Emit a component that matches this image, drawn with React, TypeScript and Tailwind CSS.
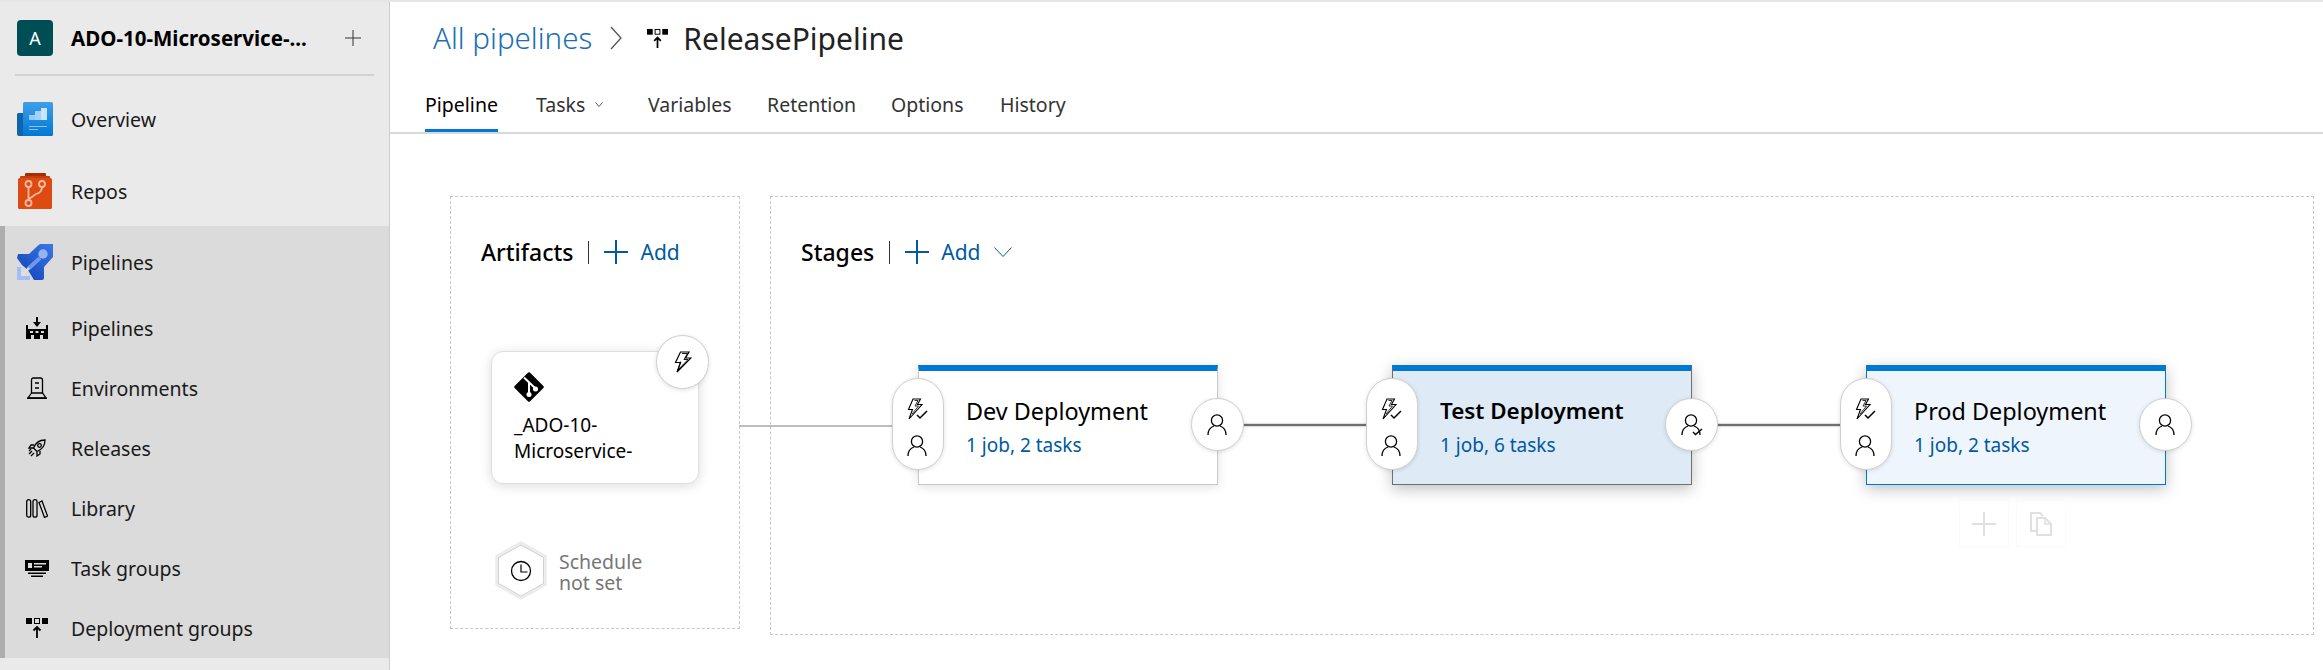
import React from "react";

const Person = ({ check = false }: { check?: boolean }) => (
  <svg width="22" height="22" viewBox="0 0 22 22" fill="none" stroke="#000" strokeWidth="1.3">
    <circle cx="10" cy="6.5" r="5.6" />
    <path d="M1 21c0-5 3-8 6-9M19 21c0-5-3-8-6-9" />
    {check && <path d="M12 18l2.5 2.5L21 15" strokeWidth="1.5" />}
  </svg>
);

const Bolt = () => (
  <svg width="18" height="22" viewBox="0 0 18 22" fill="none" stroke="#000" strokeWidth="1.2">
    <path d="M6.5 1H15l-3.500 6H17L3 21l3.500-9.500H1.500z" fill="#fff" />
    <path d="M8 2.500h5.500L10 8.500h4L4 19l2.800-8.500" strokeWidth="0.9" />
  </svg>
);

const BoltCheck = () => (
  <svg width="22" height="22" viewBox="0 0 22 22" fill="none" stroke="#000" strokeWidth="1.1">
    <path d="M6 1h7.500l-3 5.500H15L2 21l3.500-9.500H1.500z" />
    <path d="M7.500 2.500h3.500L8 8h3.500L5 16" strokeWidth="0.8" />
    <path d="M10 17l3 3 7-7" strokeWidth="1.5" />
  </svg>
);

const Plus = ({ size, color, w }: { size: number; color: string; w: number }) => (
  <svg width={size} height={size} viewBox={`0 0 ${size} ${size}`} stroke={color} strokeWidth={w}>
    <path d={`M${size / 2} 0V${size}M0 ${size / 2}H${size}`} />
  </svg>
);

const DeployIcon = ({ w = 22, h = 20 }: { w?: number; h?: number }) => (
  <svg width={w} height={h} viewBox="0 0 22 20">
    <rect x="0" y="0" width="6" height="6" fill="#000" />
    <rect x="8.500" y="0.500" width="5" height="5" fill="none" stroke="#000" />
    <rect x="16" y="0" width="6" height="6" fill="#000" />
    <path d="M11 20V9M7.500 12.500L11 9l3.500 3.500" fill="none" stroke="#000" strokeWidth="1.800" />
  </svg>
);

const Overview = () => (
  <svg width="36" height="34" viewBox="0 0 36 34">
    <defs>
      <linearGradient id="ov" x1="0" y1="0" x2="0" y2="1">
        <stop offset="0" stopColor="#3f9fe8" />
        <stop offset="1" stopColor="#0078d4" />
      </linearGradient>
    </defs>
    <path d="M1 11h8v23H2a2 2 0 0 1-2-2V12z" fill="#0f64ae" />
    <rect x="6" y="0" width="30" height="34" rx="1.500" fill="url(#ov)" />
    <rect x="12" y="13" width="6" height="5" fill="#c3e2fb" opacity="0.7" />
    <rect x="18" y="9" width="6" height="9" fill="#c3e2fb" opacity="0.8" />
    <rect x="24" y="6" width="6" height="12" fill="#c7e5fd" />
    <rect x="12" y="24" width="18" height="1" fill="#8cc5f2" />
    <rect x="12" y="27" width="9" height="1" fill="#8cc5f2" />
  </svg>
);

const Repos = () => (
  <svg width="34" height="36" viewBox="0 0 34 36" fill="none">
    <rect x="7" y="0" width="21" height="6" rx="1" fill="#a72e00" />
    <rect x="2" y="3" width="30" height="8" rx="1" fill="#c23f0e" />
    <rect x="0" y="5" width="34" height="31" rx="1.500" fill="#dd4b12" />
    <g stroke="#f7b9a0" strokeWidth="1.800">
      <circle cx="10.500" cy="11" r="3" />
      <circle cx="24" cy="11" r="3" />
      <circle cx="10.500" cy="30" r="3" />
      <path d="M10.500 14v13M24 14c0 4-2 6-6 7l-7 5" />
    </g>
  </svg>
);

const PipelinesLogo = () => (
  <svg width="36" height="36" viewBox="0 0 36 36">
    <defs>
      <linearGradient id="pl" x1="1" y1="0" x2="0" y2="1">
        <stop offset="0" stopColor="#3b78e7" />
        <stop offset="1" stopColor="#0f3fb5" />
      </linearGradient>
    </defs>
    <path d="M1 10h11L21 1.500 23 0h13v13l-9 10v11q0 2-2 2h-8l-6-10-6-5-5-7z" fill="url(#pl)" />
    <circle cx="26" cy="10" r="4.700" fill="#95b4f2" />
    <path d="M11 25L23 14" stroke="#6f97ec" strokeWidth="4" />
    <path d="M0 23h4v9h9v4H0z" fill="#a5bdf6" />
    <path d="M5 31l7-7" stroke="#e2e2e2" strokeWidth="2" />
  </svg>
);

const FactoryIcon = () => (
  <svg width="22" height="22" viewBox="0 0 22 22">
    <path d="M11 0v8" stroke="#000" strokeWidth="2" />
    <path d="M7 5l4 5 4-5z" fill="#000" />
    <path
      fillRule="evenodd"
      d="M0 8h2v4h18V8h2v14H0zM4 14v2h3v-2zM9.500 14v2h3v-2zM15 14v2h3v-2zM5 18v4h3v-4zM14 18v4h3v-4z"
      fill="#000"
    />
  </svg>
);

const EnvIcon = () => (
  <svg width="20" height="22" viewBox="0 0 20 22" fill="none" stroke="#000" strokeWidth="1.300">
    <path d="M4.500 16V3q0-2 2-2h7q2 0 2 2v13" />
    <path d="M8 6h4M8 11h4" />
    <path d="M4.500 16L1 21h18l-3.500-5z" />
    <path d="M0 21.300h20" strokeWidth="1.400" />
  </svg>
);

const RocketIcon = () => (
  <svg width="18" height="18" viewBox="0 0 18 18" fill="none" stroke="#000" strokeWidth="1.300">
    <path d="M5.500 9C7.500 4 11 1 17 1c0 6-3 9.500-8 11.500z" />
    <circle cx="11.500" cy="6.500" r="1.800" />
    <path d="M6 6H3L1 9h4M12 12v3l-3 2v-4" />
    <path d="M4 12l-3 3M6 14l-3 3M3 10l-2 2" />
  </svg>
);

const LibraryIcon = () => (
  <svg width="22" height="19" viewBox="0 0 22 19" fill="none" stroke="#000" strokeWidth="1.300">
    <rect x="0.700" y="0.700" width="4" height="17.500" rx="2" />
    <rect x="7" y="0.700" width="4" height="17.500" rx="2" />
    <path d="M13 3.500l3-1.500 5.500 15-3 1.500z" />
  </svg>
);

const TaskGroupIcon = () => (
  <svg width="24" height="17" viewBox="0 0 24 17">
    <path fillRule="evenodd" d="M0 0h24v11H0zM3 3v5h4V3zM9 3v1.500h12V3zM9 6v1.500h8V6z" fill="#000" />
    <rect x="3" y="12.500" width="18" height="1.500" fill="#000" />
    <rect x="6" y="15.500" width="12" height="1.500" fill="#000" />
  </svg>
);

const GitIcon = () => (
  <svg width="30" height="30" viewBox="0 0 30 30">
    <path d="M15 1.500L28.500 15 15 28.500 1.500 15z" fill="#000" stroke="#000" strokeWidth="2.500" strokeLinejoin="round" />
    <path d="M10 5.500L22 17M15 10.500V22" stroke="#fff" strokeWidth="2" fill="none" />
    <circle cx="21.500" cy="17" r="2.500" fill="#fff" />
    <circle cx="15" cy="22.500" r="2.500" fill="#fff" />
  </svg>
);

const ScheduleHex = () => (
  <div className="relative w-[52px] h-[59px] shrink-0">
    <svg width="52" height="59" viewBox="0 0 52 59" fill="none">
      <path d="M26 2l24 13.500v28L26 57 2 43.500v-28z" stroke="#ececec" strokeWidth="3.500" />
      <path d="M26 4l22.500 12.500v26L26 55 3.500 42.500v-26z" stroke="#d2d2d2" strokeWidth="1" />
      <circle cx="26" cy="30" r="9.500" stroke="#000" strokeWidth="1.300" />
      <path d="M26 23.500V31h6.500" stroke="#000" strokeWidth="1.200" />
    </svg>
  </div>
);

const Chevron = ({ w, h, color }: { w: number; h: number; color: string }) => (
  <svg width={w} height={h} viewBox={`0 0 ${w} ${h}`} fill="none" stroke={color} strokeWidth="1">
    <path d={`M0.500 0.500L${w / 2} ${h - 0.5}L${w - 0.5} 0.500`} />
  </svg>
);

const CircleBadge = ({ children }: { children: React.ReactNode }) => (
  <div className="absolute right-[-27px] top-[27px] z-10 w-[53px] h-[53px] rounded-full bg-white border border-[#cfcfcf] shadow-[0_1px_4px_rgba(0,0,0,0.12)] flex items-center justify-center">
    {children}
  </div>
);

type StageProps = {
  title: string;
  sub: string;
  card: string;
  titleCls: string;
  badge?: React.ReactNode;
  children?: React.ReactNode;
};

const Stage = ({ title, sub, card, titleCls, badge, children }: StageProps) => (
  <div className={`relative w-[300px] h-[120px] shrink-0 border border-t-[6px] border-t-[#0078d4] pl-[47px] pt-[25px] ${card}`}>
    <div className="absolute left-[-27px] top-[7px] z-10 w-[52px] h-[92px] rounded-[26px] bg-white border border-[#cfcfcf] shadow-[0_1px_4px_rgba(0,0,0,0.12)] flex flex-col items-center justify-center gap-[15px] pt-[7px]">
      <BoltCheck />
      <Person />
    </div>
    <div className={`leading-[30px] text-black whitespace-nowrap ${titleCls}`}>{title}</div>
    <div className="text-[19px] leading-[24px] mt-[7px] text-[#005a9e] whitespace-nowrap">{sub}</div>
    <CircleBadge>{badge ?? <Person />}</CircleBadge>
    {children}
  </div>
);

const Link = () => (
  <div className="w-[174px] h-[2px] shrink-0 self-center bg-[#6f6f6f] shadow-[0_0_2px_#8a8a8a]" />
);

const Heading = ({ label, chevron = false }: { label: string; chevron?: boolean }) => (
  <div className="flex items-center h-[24px]">
    <span className="text-[23px] font-medium text-black leading-[24px]">{label}</span>
    <span className="w-px h-[23px] bg-[#333] ml-[15px] mr-[15px]" />
    <Plus size={24} color="#005a9e" w={2} />
    <span className="text-[21px] text-[#005a9e] ml-[12px] leading-[24px]">Add</span>
    {chevron && (
      <span className="ml-[13px]">
        <Chevron w={18} h={10} color="#005a9e" />
      </span>
    )}
  </div>
);

const subItems: { label: string; icon: React.ReactNode }[] = [
  { label: "Pipelines", icon: <FactoryIcon /> },
  { label: "Environments", icon: <EnvIcon /> },
  { label: "Releases", icon: <RocketIcon /> },
  { label: "Library", icon: <LibraryIcon /> },
  { label: "Task groups", icon: <TaskGroupIcon /> },
  { label: "Deployment groups", icon: <DeployIcon /> },
];

const tabs: { label: string; width: string; chevron?: boolean; active?: boolean }[] = [
  { label: "Pipeline", width: "w-[111px]", active: true },
  { label: "Tasks", width: "w-[112px]", chevron: true },
  { label: "Variables", width: "w-[119px]" },
  { label: "Retention", width: "w-[124px]" },
  { label: "Options", width: "w-[109px]" },
  { label: "History", width: "w-[80px]" },
];

export default function App() {
  return (
    <div className="w-[2323px] h-[670px] overflow-hidden bg-white flex flex-col font-['Noto_Sans',sans-serif] text-[#1a1a1a]">
      <div className="h-[2px] bg-[#e6e6e6] shrink-0" />
      <div className="flex flex-1 min-h-0">
        <aside className="w-[390px] shrink-0 bg-[#eaeaea] border-r border-[#cdcdcd] flex flex-col">
          <div className="h-[72px] flex items-center pl-[17px] shrink-0">
            <div className="w-[36px] h-[36px] rounded-[4px] bg-[#004e55] text-white flex items-center justify-center text-[18px]">
              A
            </div>
            <span className="ml-[18px] w-[274px] text-[20.5px] font-bold text-black whitespace-nowrap">
              ADO-10-Microservice-...
            </span>
            <Plus size={16} color="#333" w={1} />
          </div>
          <div className="h-[2px] mx-[15px] bg-[#d2d2d2] shrink-0" />
          <div className="h-[7px] shrink-0" />
          <div className="h-[72px] flex items-center pl-[17px] shrink-0">
            <span className="w-[54px] flex"><Overview /></span>
            <span className="text-[19.5px] pt-[2px]">Overview</span>
          </div>
          <div className="h-[71px] flex items-center pl-[18px] shrink-0">
            <span className="w-[53px] flex"><Repos /></span>
            <span className="text-[19.5px] pt-[2px]">Repos</span>
          </div>
          <div className="h-[432px] bg-[#dbdbdb] border-l-[5px] border-[#adadad] shrink-0 flex flex-col">
            <div className="h-[72px] flex items-center pl-[12px] shrink-0">
              <span className="w-[54px] flex"><PipelinesLogo /></span>
              <span className="text-[19.5px] pt-[2px]">Pipelines</span>
            </div>
            {subItems.map((s) => (
              <div key={s.label} className="h-[60px] flex items-center shrink-0">
                <span className="w-[66px] flex justify-center pr-[2px]">{s.icon}</span>
                <span className="text-[19.5px] pt-[2px]">{s.label}</span>
              </div>
            ))}
          </div>
        </aside>

        <main className="flex-1 min-w-0 flex flex-col">
          <div className="h-[72px] flex items-center pl-[43px] shrink-0">
            <span className="text-[29.5px] font-light text-[#1a6fb5] whitespace-nowrap">All pipelines</span>
            <span className="ml-[18px]">
              <svg width="12" height="24" viewBox="0 0 12 24" fill="none" stroke="#555" strokeWidth="1.300">
                <path d="M1 1l10 11L1 23" />
              </svg>
            </span>
            <span className="ml-[25px] flex"><DeployIcon w={21} h={21} /></span>
            <span className="ml-[15px] text-[30px] text-[#222] whitespace-nowrap">ReleasePipeline</span>
          </div>
          <div className="h-[60px] flex items-stretch pl-[35px] border-b-2 border-[#d9d9d9] shrink-0">
            {tabs.map((t) => (
              <div key={t.label} className={`${t.width} shrink-0 flex`}>
                <div
                  className={`flex items-center gap-[10px] h-[58px] pt-[6px] text-[19.5px] whitespace-nowrap ${
                    t.active ? "border-b-[3px] border-[#0078d4] text-black" : "border-b-[3px] border-transparent text-[#333]"
                  }`}
                >
                  {t.label}
                  {t.chevron && <Chevron w={8} h={5} color="#555" />}
                </div>
              </div>
            ))}
          </div>

          <div className="flex pl-[60px] pt-[62px] gap-[30px]">
            <section className="relative w-[290px] h-[433px] shrink-0 border border-dashed border-[#c8c8c8] pt-[43px] pl-[30px]">
              <Heading label="Artifacts" />
              <div className="relative ml-[10px] mt-[87px] w-[208px] h-[133px] rounded-[12px] bg-white border border-[#dedede] shadow-[0_2px_12px_rgba(0,0,0,0.14)] pt-[20px] pl-[22px]">
                <GitIcon />
                <div className="mt-[10px] text-[19px] leading-[26px] text-black whitespace-nowrap">
                  _ADO-10-
                  <br />
                  Microservice-
                </div>
                <div className="absolute right-[-11px] top-[-17px] w-[53px] h-[54px] rounded-full bg-white border border-[#cfcfcf] shadow-[0_1px_4px_rgba(0,0,0,0.12)] flex items-center justify-center">
                  <Bolt />
                </div>
              </div>
              <div className="ml-[14px] mt-[57px] flex items-center">
                <ScheduleHex />
                <div className="ml-[12px] pt-[2px] text-[19.5px] leading-[21px] text-[#767676] whitespace-nowrap">
                  Schedule
                  <br />
                  not set
                </div>
              </div>
              <div className="absolute left-[288px] top-[228px] w-[154px] h-[2px] bg-[#bdbdbd]" />
            </section>

            <section className="w-[1544px] h-[439px] shrink-0 border border-dashed border-[#c8c8c8] pt-[43px] pl-[30px]">
              <Heading label="Stages" chevron />
              <div className="flex ml-[117px] mt-[101px]">
                <Stage
                  title="Dev Deployment"
                  sub="1 job, 2 tasks"
                  card="bg-white border-[#c8c8c8] shadow-[0_2px_10px_rgba(0,0,0,0.12)]"
                  titleCls="text-[23.4px]"
                />
                <Link />
                <Stage
                  title="Test Deployment"
                  sub="1 job, 6 tasks"
                  card="bg-[#deeaf6] border-[#6f6f6f] shadow-[0_4px_14px_rgba(0,0,0,0.25)]"
                  titleCls="text-[22.4px] font-semibold"
                  badge={<Person check />}
                />
                <Link />
                <Stage
                  title="Prod Deployment"
                  sub="1 job, 2 tasks"
                  card="bg-[#eff5fc] border-[#0078d4] shadow-[0_4px_14px_rgba(0,0,0,0.25)]"
                  titleCls="text-[23.4px]"
                >
                  <div className="absolute left-[92px] top-[129px] flex gap-[7px]">
                    <div className="w-[50px] h-[47px] border border-dotted border-[#f6f6f6] flex items-center justify-center">
                      <Plus size={24} color="#e0e0e0" w={2} />
                    </div>
                    <div className="w-[50px] h-[47px] border border-dotted border-[#f6f6f6] flex items-center justify-center">
                      <svg width="22" height="24" viewBox="0 0 22 24" fill="none" stroke="#e0e0e0" strokeWidth="2">
                        <path d="M7 19H1V1h9l3 3" />
                        <path d="M7 6h8l6 6v11H7z" />
                        <path d="M15 6v6h6" strokeWidth="1.500" />
                      </svg>
                    </div>
                  </div>
                </Stage>
              </div>
            </section>
          </div>
        </main>
      </div>
    </div>
  );
}
